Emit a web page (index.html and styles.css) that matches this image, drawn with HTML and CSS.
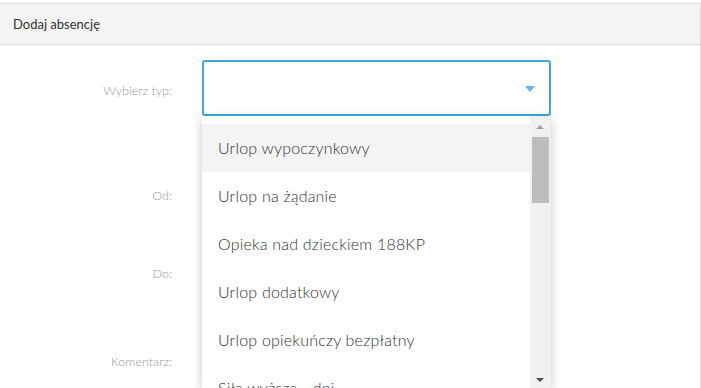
FILE: index.html
```html
<!DOCTYPE html>
<html>
<head>
  <title>Dodaj absencję</title>
  <link rel="stylesheet" href="styles.css">
</head>
<body>
  <div class="panel">
    <div class="panel-heading">Dodaj absencję</div>
    <div class="panel-body">
      <form class="absence-form">
        <div class="form-row row-type">
          <label class="form-label">Wybierz typ:</label>
          <div class="select-wrap">
            <div class="select-box">
              <span class="caret"></span>
            </div>
            <!-- open dropdown list -->
            <div class="select-dropdown">
              <ul class="option-list">
                <li class="active">Urlop wypoczynkowy</li>
                <li>Urlop na żądanie</li>
                <li>Opieka nad dzieckiem 188KP</li>
                <li>Urlop dodatkowy</li>
                <li>Urlop opiekuńczy bezpłatny</li>
                <li>Siła wyższa - dni</li>
              </ul>
              <div class="scrollbar">
                <span class="scroll-arrow up"></span>
                <span class="scroll-thumb"></span>
                <span class="scroll-arrow down"></span>
              </div>
            </div>
          </div>
        </div>
        <div class="form-row row-from">
          <label class="form-label">Od:</label>
          <div class="field"></div>
        </div>
        <div class="form-row row-to">
          <label class="form-label">Do:</label>
          <div class="field"></div>
        </div>
        <div class="form-row row-comment">
          <label class="form-label">Komentarz:</label>
          <div class="field"></div>
        </div>
      </form>
    </div>
  </div>
</body>
</html>
```

FILE: styles.css
```css
body {
  margin: 0;
  padding-top: 3px;
  font-family: Lato, "Open Sans", sans-serif;
  background-color: #ffffff;
  color: #333;
  height: 385px;
  overflow: hidden;
}

.panel {
  border-right: 1px solid #dcdcdc;
}

.panel-heading {
  height: 40px;
  line-height: 40px;
  padding-left: 13px;
  font-size: 13px;
  color: #333;
  background-color: #f4f4f4;
  border-top: 1px solid #dcdcdc;
  border-bottom: 1px solid #dcdcdc;
}

.panel-body {
  background-color: #ffffff;
  height: 343px;
  overflow: hidden;
}

.absence-form {
  padding-top: 15px;
}

.form-row {
  display: flex;
  align-items: center;
  gap: 30px;
}

.form-label {
  width: 172px;
  text-align: right;
  font-size: 12.5px;
  font-weight: 300;
  color: #999;
}

.field {
  width: 349px;
  height: 40px;
}

.row-type .form-label {
  padding-top: 4px;
}

.row-from {
  margin-top: 59px;
}

.row-to {
  margin-top: 38px;
}

.row-comment {
  margin-top: 48px;
}

/* select */
.select-wrap {
  position: relative;
  width: 349px;
}

.select-box {
  height: 52px;
  border: 2px solid #3ba8dc;
  border-radius: 3px;
  position: relative;
}

.caret {
  position: absolute;
  right: 14px;
  top: 24px;
  width: 0;
  height: 0;
  border-left: 5px solid transparent;
  border-right: 5px solid transparent;
  border-top: 6px solid #5ab9ea;
}

.select-dropdown {
  position: absolute;
  top: 56px;
  left: 0;
  width: 349px;
  height: 272px;
  display: flex;
  background-color: #ffffff;
  box-shadow: 0 3px 10px rgba(0, 0, 0, 0.22);
  z-index: 2;
  overflow: hidden;
}

.option-list {
  flex: 1;
  list-style: none;
  margin: 0;
  padding: 8px 0 0 0;
}

.option-list li {
  height: 48px;
  line-height: 48px;
  padding-left: 16px;
  font-size: 16px;
  font-weight: 300;
  letter-spacing: 0.2px;
  color: #333;
  white-space: nowrap;
}

.option-list li.active {
  background-color: #f4f4f4;
}

/* scrollbar drawn by hand */
.scrollbar {
  width: 21px;
  background-color: #f1f1f1;
  position: relative;
}

.scroll-thumb {
  position: absolute;
  left: 2px;
  right: 2px;
  top: 21px;
  height: 66px;
  background-color: #bdbdbd;
}

.scroll-arrow {
  position: absolute;
  left: 6px;
  width: 0;
  height: 0;
  border-left: 4.5px solid transparent;
  border-right: 4.5px solid transparent;
}

.scroll-arrow.up {
  top: 9px;
  border-bottom: 4px solid #a3a3a3;
}

.scroll-arrow.down {
  bottom: 6px;
  border-top: 4px solid #505050;
}
```
